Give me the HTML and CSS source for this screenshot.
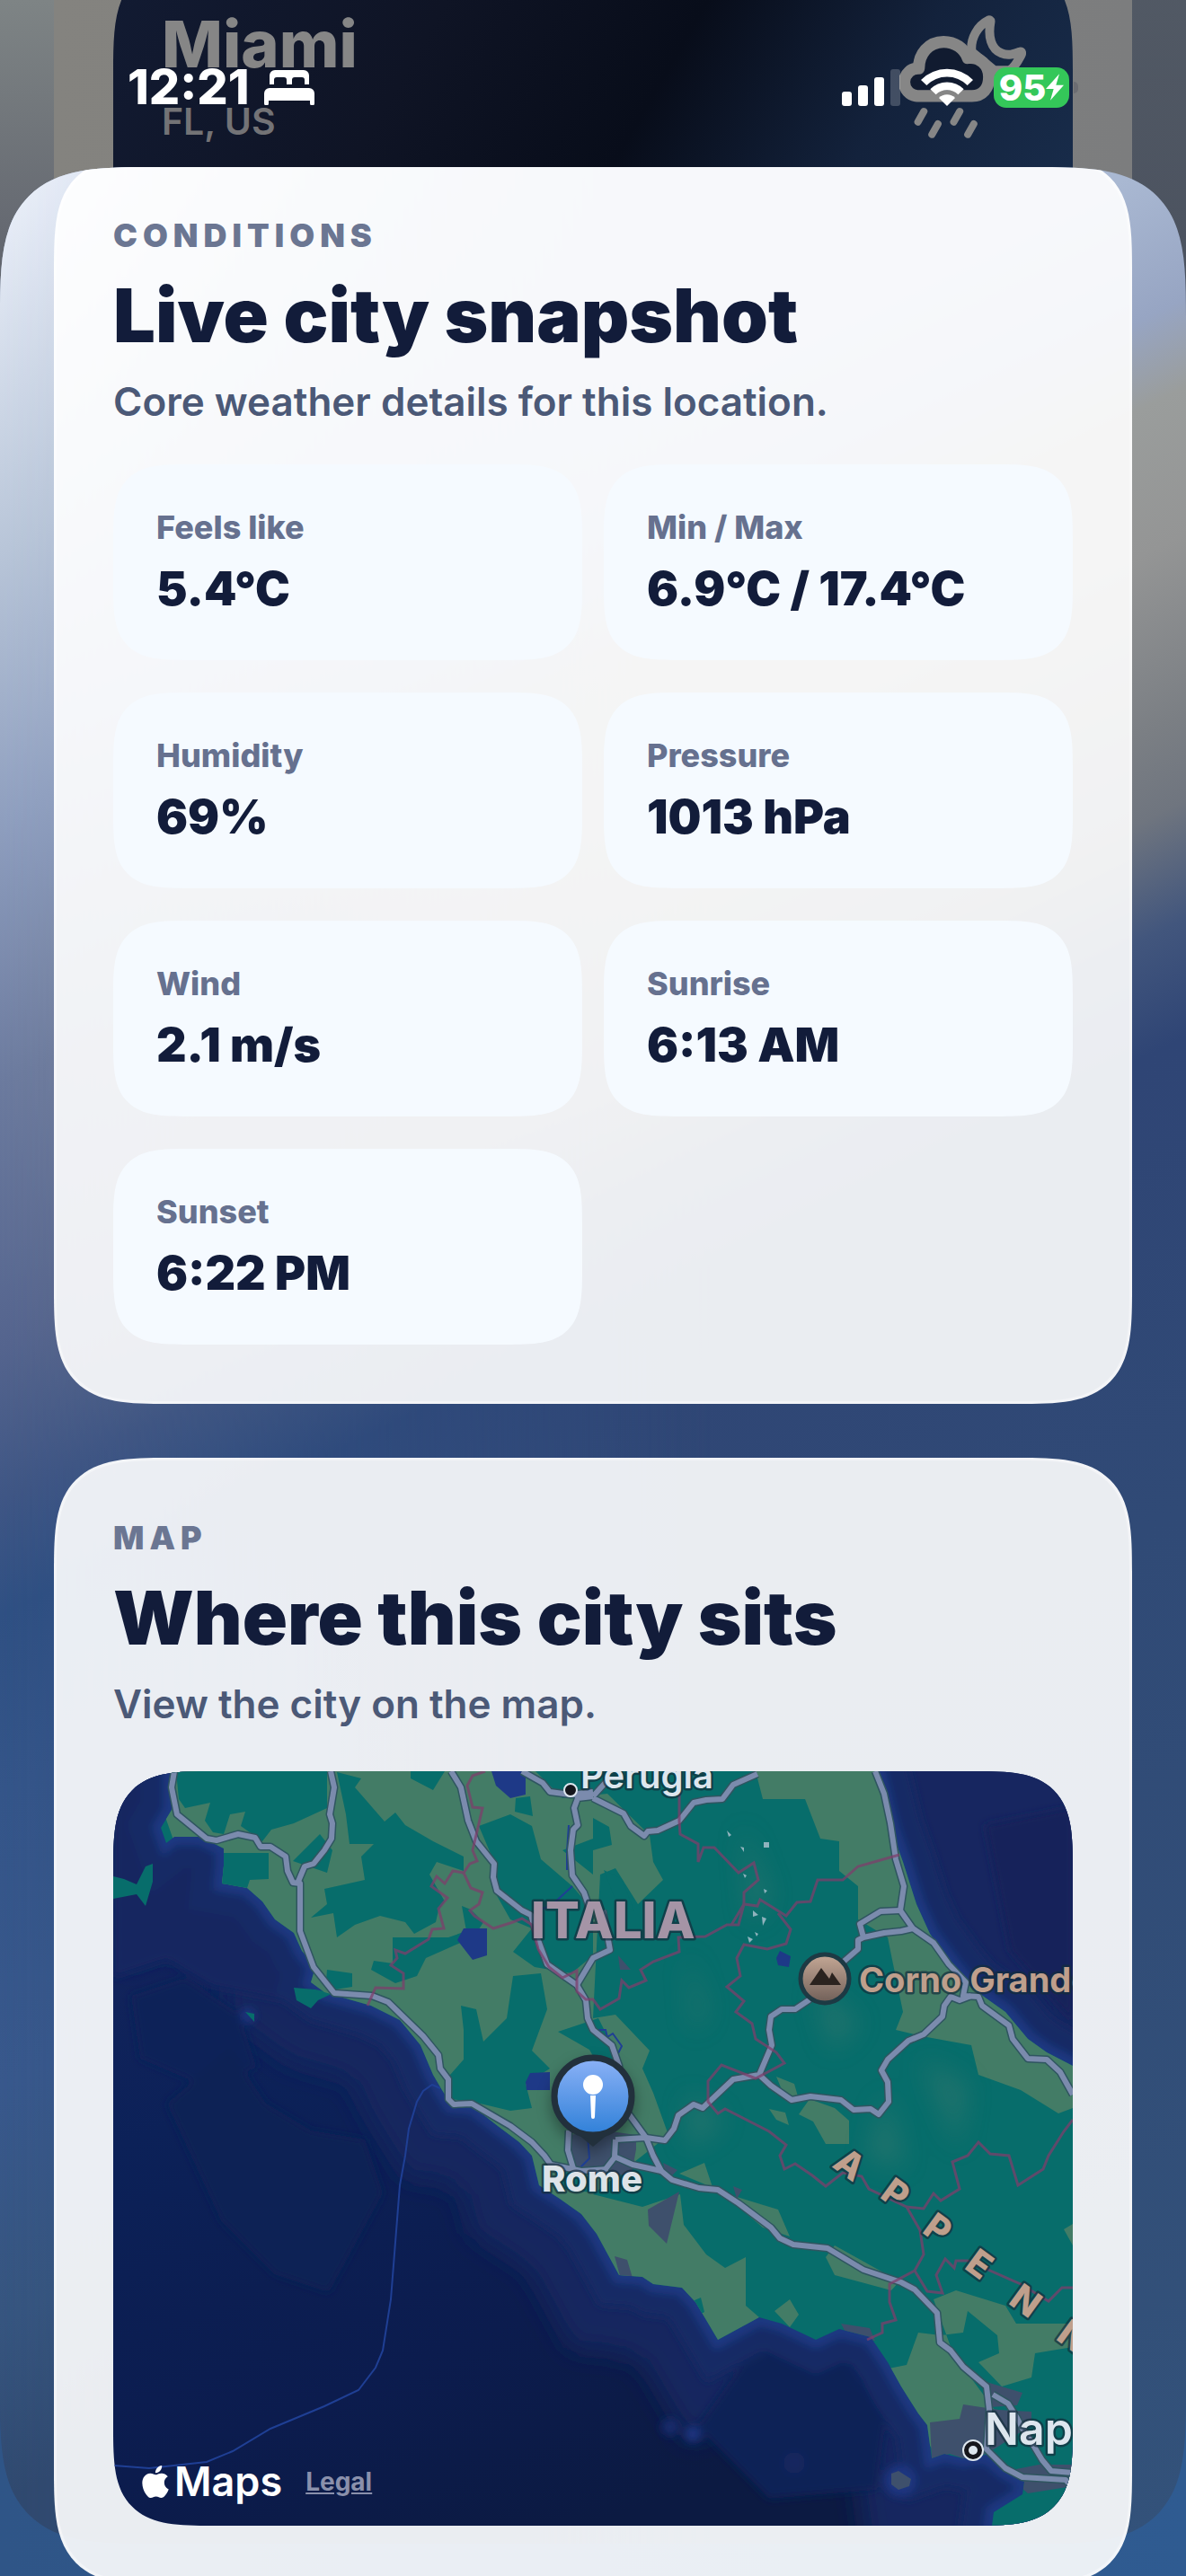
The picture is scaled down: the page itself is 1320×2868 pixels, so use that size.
FILE: index.html
```html
<!DOCTYPE html>
<html lang="en">
<head>
    <meta charset="UTF-8">
    <meta name="viewport" content="width=device-width, initial-scale=1.0">
    <title>City details</title>
    <link rel="stylesheet" href="styles.css">
</head>
<body>
    <header class="status-bar">
        <div class="status-left">
            <span class="time">12:21</span>
            <svg class="bed" viewBox="0 0 56 39" aria-hidden="true">
                <path d="M6 16V6a6 6 0 0 1 6-6h32a6 6 0 0 1 6 6v10h-5v-5a3 3 0 0 0-3-3h-8a3 3 0 0 0-3 3v5h-6v-5a3 3 0 0 0-3-3h-8a3 3 0 0 0-3 3v5z"/>
                <path d="M0 26a6 6 0 0 1 6-6h44a6 6 0 0 1 6 6v11a2 2 0 0 1-5 0v-3H5v3a2 2 0 0 1-5 0z"/>
            </svg>
        </div>
        <div class="status-right">
            <svg class="signal" viewBox="0 0 65 41" aria-hidden="true">
                <rect x="0" y="25" width="11" height="16" rx="3"/>
                <rect x="18" y="18" width="11" height="23" rx="3"/>
                <rect x="36" y="9" width="11" height="32" rx="3"/>
                <rect x="54" y="0" width="11" height="41" rx="3" opacity=".2"/>
            </svg>
            <svg class="wifi" viewBox="0 0 174 126" aria-hidden="true">
                <path d="M0 39a122 122 0 0 1 174 0l-19 18a96 96 0 0 0-136 0z"/>
                <path d="M31 70a79 79 0 0 1 112 0l-19 18a52 52 0 0 0-74 0z"/>
                <path d="M60 99a38 38 0 0 1 54 0l-27 27z"/>
            </svg>
            <div class="battery">
                <span>95</span>
                <svg viewBox="0 0 60 88" aria-hidden="true"><path d="M45 0 0 50h26L15 88l45-51H34z"/></svg>
            </div>
        </div>
    </header>

    <!-- Previous screen, dimmed -->
    <div class="behind">
        <div class="behind-card">
            <div class="hero">
                <div>
                    <div class="hero-city">Miami</div>
                    <div class="hero-region">FL, US</div>
                </div>
                <svg class="hero-icon" viewBox="243 50 424 412" aria-hidden="true">
                    <path d="M485 172c-5-46 20-87 58-106 2 0 6 0 5 6-9 50 2 91 36 105 24 10 44 2 63-5 6 0 7 5 3 12-10 19-22 41-38 50h-52z"/>
                    <path class="cloud" d="M303 320a40 40 0 0 1 5-92c0-48 32-89 83-89 38 0 69 22 81 54 39-6 71 24 71 63s-22 64-57 64z"/>
                    <path class="rain" d="M325 372l-20 35M372 414l-20 35M445 372l-20 35M492 414l-20 35"/>
                </svg>
            </div>
        </div>
    </div>

    <main class="sheet">
        <section class="card">
            <p class="eyebrow">CONDITIONS</p>
            <h2>Live city snapshot</h2>
            <p class="subtitle">Core weather details for this location.</p>
            <dl class="tiles">
                <div class="tile"><dt>Feels like</dt><dd>5.4°C</dd></div>
                <div class="tile"><dt>Min / Max</dt><dd>6.9°C / 17.4°C</dd></div>
                <div class="tile"><dt>Humidity</dt><dd>69%</dd></div>
                <div class="tile"><dt>Pressure</dt><dd>1013 hPa</dd></div>
                <div class="tile"><dt>Wind</dt><dd>2.1 m/s</dd></div>
                <div class="tile"><dt>Sunrise</dt><dd>6:13 AM</dd></div>
                <div class="tile"><dt>Sunset</dt><dd>6:22 PM</dd></div>
            </dl>
        </section>

        <section class="card">
            <p class="eyebrow">MAP</p>
            <h2>Where this city sits</h2>
            <p class="subtitle">View the city on the map.</p>
            <div class="map">
                <svg class="map-canvas" viewBox="0 0 1068 840" preserveAspectRatio="xMidYMid slice" role="img" aria-label="Map of central Italy">
                    <defs>
                        <linearGradient id="deep" x1="0" y1="0" x2=".5" y2="1">
                            <stop offset="0" stop-color="#17265f"/>
                            <stop offset=".4" stop-color="#0c2158"/>
                            <stop offset=".75" stop-color="#0c1c4e"/>
                            <stop offset="1" stop-color="#0c1a42"/>
                        </linearGradient>
                        <linearGradient id="pinFill" x1="0" y1="0" x2="0" y2="1">
                            <stop offset="0" stop-color="#8cb2f7"/>
                            <stop offset="1" stop-color="#2f80d8"/>
                        </linearGradient>
                        <linearGradient id="peakFill" x1="0" y1="0" x2="0" y2="1">
                            <stop offset="0" stop-color="#c5a896"/>
                            <stop offset="1" stop-color="#705f58"/>
                        </linearGradient>
                        <filter id="soft" x="-10%" y="-10%" width="120%" height="120%"><feGaussianBlur stdDeviation="5"/></filter>
                        <filter id="terrain" x="-10%" y="-10%" width="120%" height="120%"><feGaussianBlur stdDeviation="14"/></filter>
                        <path id="land" d="M65 0V43L53 63l6 17 9-7h29l26 13v19l-2 20 28 5 17 15 14 20 21 15 9 20 15 18-5 17 15 11 24 7 28 8 32 16 23 28 14 33 10 17 10 16 24 2 28 22 24 18 14 15 8 33 23 15 24 17 17 22 25 46 26 2 12 8 32 4 15 16 12 20 13 22 46-25 25 7 38 18 26-12 35 9 19 28 15 27 19 30 10 13 5 37 14-5 21 5 26-4 19 17 23 13-2 14-32 20-2 15h90V328l-29-15-21-15-25-30-38-27-17-20-29-40-15-33-15-47-13-36L850 0z"/>
                        <clipPath id="landClip"><use href="#land"/></clipPath>
                        <g id="roads">
                            <path d="M68 0l-3 18 6 30 33 27 11 2 24-7 19 4 6 10h11l17 11 2 16 6 13 8 1v53l15 40 23 29 42 3 18 7 39 38 17 21 2 15 9 12v22l6 6 20-1 43 25 24 18 14 15 7 10 34 7 30-2"/>
                            <path d="M242 0l4 18-5 30 3 10-1 17-8 13-12 15-10 3-8 19"/>
                            <path d="M376 0l11 18 8 37 9 23 20 25-1 15 4 15 28 22 10 5 8 28 10 27 33 23 10 17 2 20 6 13 21 17 8 23 3 43 27 37 8 20 9 17 12 10 30 9 21 2 23 15 36 27 10 12 15 7 38 4 40 24 42 14 15 8 25 26 3 33 12 9 14 18 26 22 3 26-3 44 21 21 19 10 48 3 8 9"/>
                            <path d="M455 0l23 13 8 10 23 3 25-3M534 30l34 17 8 14 15 11 4-5 11-1 24-11 16-20 14-3 18-1 12-16 27-12M534 28l-17 2-4 11 4 19-5 5-3 23 2 28 13 19 7 20M545 155l8 44-19 9-6 10-12 20M534 28l18-20"/>
                            <path d="M848 0l10 25 7 33 6 40 9 30-4 27 14 20 23 16 17 24 19 20-3 15 17 1 4 10 30 22 4 15 17 22 21 1 15 14 14 25"/>
                            <path d="M876 155l-22 1-23 14 4 15-6 3v10l-15 13-40 44-15 10-15 0-12 8-2 15 3 17-14 33-29 5-34 32-10-4-17 12-5 15-10 13-21-3-34 2M835 185l23-5 19-2 13-3"/>
                            <path d="M719 338l13 12 23 16 21-4 34 4 14 11 19-1 9 6 11-14-1-22-7-13 7-12 23-21 17-7 21-20 2-12 7-10 10 4 13-5"/>
                            <path d="M507 400l-1 22 6 20M559 410l-1 20-14 18M560 430l18 8 32 7M979 694l17 10 10 16 6 12 10 15 12 20 10 12 24 2"/>
                        </g>
                    </defs>

                    <!-- Sea -->
                    <rect width="1068" height="840" fill="url(#deep)"/>
                    <use href="#land" class="shelf shelf-far" filter="url(#terrain)"/>
                    <path d="M850 0h218v340L938 221z" fill="#172660"/>
                    <g filter="url(#soft)">
                        <path d="M970 60l98-20v240l-70-80z" fill="#15235a"/>
                        <path d="M0 0h60v60l60 70 60 70 30 60-100-20-50-30-60 20z" fill="#172660"/>
                        <path d="M20 250l60-20 60 40 20 60-60 20-70-30z" fill="#0c2358"/>
                        <path d="M650 730l50-70 60-30 60 30 40 60-10 80-120 10z" fill="#0b2157"/>
                        <path d="M60 370l70-60 40 60 50 30 60 10 20 60-60 110-60-20-60-60z" fill="#0e2054"/>
                        <use href="#land" class="shelf shelf-mid"/>
                        <use href="#land" class="shelf shelf-near"/>
                        <circle cx="150" cy="272" r="8" fill="#1b3580"/>
                        <circle cx="620" cy="730" r="10" fill="#162a6a"/>
                        <circle cx="645" cy="738" r="9" fill="#1b3580"/>
                        <circle cx="758" cy="770" r="12" fill="#15265f"/>
                        <circle cx="876" cy="790" r="18" fill="#1b3580"/>
                    </g>
                    <path class="ferry" d="M364 353l-9-4-10 7-7 12-9 30-4 30-6 33-10 127-9 57-8 19-19 25-38 18-60 25-42 25-29 12-64 7-39-3"/>

                    <!-- Land -->
                    <use href="#land" class="forest"/>
                    <path class="forest" d="M0 117l12 3 14 6 10-20 8-3v20l-8 27-10-13-26 5zM201 241l24 2 20 4-17 8-8 9-16-9zM147 268l10 2v9z"/>
                    <path class="urban" d="M866 782l8-3 14 9-2 8-12 4-8-6z"/>
                    <g clip-path="url(#landClip)">
                        <path class="plain" d="M40 0H470l30 30 50-5 47 46 4 30 11 20-28 27-25-40-17 7-8 160 25-4 38 40-8 20 12 27 17 47-29 23-55 43 55 14 42-14 4 34 25 33 21 15 23-12v54l15 13-60 40-120-80-130-120-160-160L100 170z"/>
                        <path class="plain" d="M715 0l8 31h47l17 44 21 3v33l21 17v37l33 20 4 20 13 63-8 20 29 7 55 10 8 33 47 17 42 26 16-6V0z"/>
                        <path class="plain" d="M630 448l28-12 10 30 72 22 13 30-30-10-50-42zM793 541l10-13 72 40-9 10-63-17zM736 601l17-13 10 17-10 14zM775 365l-12 17 16 8 14 25h26l0-26-16-14zM738 340l20 8 4 14-14 2zM730 376l18 4 4 14-14-6z"/>
                        <path class="plain" d="M913 588l25-10 55 17 12 20 63 0v26l-42 7-4 27-33 10-26-27 23-10-2-20-33-27-5 24-25 3-25-3-13 36-30 6 60 90 40 0 8-12h26v-26l-52-70zM1058 510l10-6v24z"/>
                        <path class="forest" d="M70 0l3 31 7 10 28-6-6 20 9 13 12 2 7-22 17-3-5 16 24 17 10-13 25-7 37-17V0zM123 91h50v29l-21 1-3 9-28-4zM200 100l30-30 14 18-6 25z"/>
                        <path class="forest" d="M249 1l27 7-7 10 33 38 12-10 11 14 31 18 34 17v16l-30-10-8 14 17 30-7 10-3 13-24 13-10-13-28-7-28 10-20 14-4-27-25 5 18-15-3-17 45-10-4-26 14-14h-27l-4-33z"/>
                        <path class="forest" d="M331 8l25 13 13-21h-38zM407 61l35-13 24 13 10 37 35 30 23 27v50l-24 20-41-7-24-17 21-26-24-10-21-37 3-27zM448 30l16-2 3 22-20-5zM490 0h60v20l-30 10zM500 88l34-13v40zM534 52l18 10 3 20-21 6z"/>
                        <path class="forest" d="M311 185l62 0 20-7-5-28 10 4 14 14-10 16-54 24-10 20-24 8-27-15 3-10 21 3zM238 221l28 4v15l-19 3-10-9zM546 110l20 10 14 36-20-10z"/>
                        <path class="forest" d="M387 261l17 4 8 36 26-26 7-47 31-3 7 40-17 46 20 20-27 17 7 27-24 3-42-10-24-3-1-27 15-17v-33zM495 290l45-15 20 40-10 30-20-35zM490 440l30 0 20 30-40-5zM640 592l14-6 4 16-10 6z"/>
                        <path class="urban" d="M504 405l50-4 28 4v16l-5 27-30 4-38-7zM595 488l35-20-14 58-20-20zM909 725l33-4 4-16 40 6 36 2v15l-42 27-25 13-24-8-20 6zM972 680l40 12-6 14-30 2zM990 780l40-8 38 0v24l-50 8zM810 615l32 5 6 14-30-4zM558 540l14 4 6 20-14-2zM612 436l16 8-12 12zM562 205l14 16-12 0zM690 462l10 4-6 10z"/>
                        <g class="relief" filter="url(#terrain)">
                            <path d="M700 60l30 80-20 30zM640 200l20 70-14 20zM780 240l50 40-30 30zM900 320l50 30-10 70zM860 360l20 80-40-10zM640 360l40 30-40 30z"/>
                        </g>
                        <path class="snow" d="M683 66l5 5-3 2zM724 79h6v6h-6zM698 84l4 1v5zM701 114l4 2-2 3zM724 131l4 2-3 3zM712 155l6 5-6 2zM722 162l5 2-4 8zM706 184l6 3-4 4zM714 179l4 2-2 3z"/>
                    </g>
                    <path class="water" d="M421 0h38v26l-17 4-16-14zM383 188l7-13h26v30l-16 5zM459 346l5-10 22-1v20h-26zM738 208l4-8 12 6-2 12-12-2z"/>
                    <path class="river" d="M511 128l-24 22-18 6M536 288h12l2 8 6-4 10 14-6 12M528 405l2 26-12 12M507 60l-2 30 0 20"/>

                    <!-- Motorways: dark casing first, then the road itself -->
                    <use href="#roads" class="road road-casing"/>
                    <use href="#roads" class="road road-top"/>

                    <!-- Region borders -->
                    <g class="borders">
                        <path d="M414 0l-14 5-6 11 6 24 11 1-11 47 5 12-8 3-7 10-12-2-9 14-9-8-6 11 18 13-10 12 6 22-13 1-4 11-26 16-11-4 2 9-7 8 14 9v17l-31-1-9 20"/>
                        <path d="M390 113l8 17 13 5-4 13-10 7 5 6 21 14 19-6 13-5 11 7 7 27 12 20 15 12 16-8v23l10 9h8l8 11 21-12 3-20 8 8 19-8-6-12 14-9 29-11-1-16 30-1 24-13h13l6-23 15 2 3-7 29 18 12-15 15-1 8-24 28 0 17-15 46-13"/>
                        <path d="M630 15v40l1 15 20 11v20l6-16h12l27 28 17-11 5 19-16 14v13l-14 23"/>
                        <path d="M740 158l14 18-5 16-21 6-26-5-8 15 4 20-15 12 19 16-9 12 18 13 4 17 23 15 9 12-32 17-38-15-15 18v23l11 13 8-5 49 25 19 15-7 12 5 15 12-6 19 13 15 12 19-15 21 4 8 14 42 20 19 2 11-17 8 8 21-13-8-30 17-7 12-15 13 13 21 2 10 33 28-18 6-15 17-27 10-13"/>
                        <path d="M883 485l15 26 4 27-10 18-28 15v20l7 20-15 4v10l-17 8"/>
                        <path d="M892 556l14 23 17 2-7-20 10-18 10 10 2-8h13l59 26 31 19 15-15h12"/>
                    </g>

                    <!-- Labels -->
                    <circle class="town" cx="509" cy="21" r="7"/>
                    <text class="label label-city" x="520" y="19" font-size="40">Perugia</text>
                    <text class="label label-country" x="465" y="186" font-size="56">ITALIA</text>
                    <g class="peak">
                        <circle cx="792" cy="231" r="27" fill="url(#peakFill)"/>
                        <path d="M775 238l13-19 9 12 3-7 10 14z"/>
                    </g>
                    <text class="label label-peak" x="830" y="246" font-size="38">Corno Grande</text>
                    <text class="label label-range" x="799 852 899 946 995 1048" y="440 474 513 553 592 632" rotate="36" font-size="40">APPENN</text>
                    <text class="label label-city" x="970" y="750" font-size="50">Naples</text>
                    <circle class="town" cx="957" cy="756" r="11"/>
                    <circle cx="957" cy="756" r="5" fill="#dde6ee"/>
                    <text class="label label-main" x="477" y="468" font-size="40">Rome</text>
                    <g class="pin">
                        <path d="M512 400l22 18 22-18z" fill="#22303c"/>
                        <circle cx="534" cy="362" r="43" fill="url(#pinFill)"/>
                        <circle cx="534" cy="349" r="11" fill="#fff"/>
                        <path d="M531 361h6l-1 24a2 2 0 0 1-4 0z" fill="#fff"/>
                    </g>
                </svg>
                <div class="map-credit">
                    <svg class="apple" viewBox="2 0 20 24" aria-hidden="true"><path d="M12.152 6.896c-.948 0-2.415-1.078-3.96-1.04-2.04.027-3.91 1.183-4.961 3.014-2.117 3.675-.546 9.103 1.519 12.09 1.013 1.454 2.208 3.09 3.792 3.039 1.52-.065 2.09-.987 3.935-.987 1.831 0 2.35.987 3.96.948 1.637-.026 2.676-1.48 3.676-2.948 1.156-1.688 1.636-3.325 1.662-3.415-.039-.013-3.182-1.221-3.22-4.857-.026-3.04 2.48-4.494 2.597-4.559-1.429-2.09-3.623-2.324-4.39-2.376-2-.156-3.675 1.09-4.61 1.09zM15.53 3.83c.843-1.012 1.4-2.427 1.245-3.83-1.207.052-2.662.805-3.532 1.818-.78.896-1.454 2.338-1.273 3.714 1.338.104 2.715-.688 3.559-1.701"/></svg>
                    <span class="maps-name">Maps</span>
                    <a href="#legal">Legal</a>
                </div>
            </div>
        </section>
    </main>
</body>
</html>
```
FILE: styles.css
```css
* {
    box-sizing: border-box;
}

body {
    position: relative;
    display: flex;
    flex-direction: column;
    height: 100vh;
    margin: 0;
    overflow: hidden;
    font-family: Inter, "Liberation Sans", sans-serif;
    color: #121c3a;
    background: linear-gradient(90deg, #2f5587, #2f5b91);
}

h2, p, dl, dd {
    margin: 0;
}

/* Status bar */
.status-bar {
    position: absolute;
    top: 66px;
    left: 0;
    right: 0;
    z-index: 2;
    display: flex;
    justify-content: space-between;
    align-items: center;
    height: 62px;
    padding: 0 130px 0 142px;
    color: #fff;
}

.status-left, .status-right {
    display: flex;
    align-items: center;
}

.status-left {
    gap: 16px;
}

.status-bar svg {
    display: block;
    fill: currentColor;
}

.time {
    font-size: 54px;
    font-weight: 800;
    line-height: 62px;
}

.bed {
    width: 56px;
    height: 39px;
}

.status-right {
    gap: 23px;
}

.signal {
    width: 65px;
    height: 41px;
}

.wifi {
    width: 58px;
    height: 42px;
}

.battery {
    position: relative;
    display: flex;
    align-items: center;
    justify-content: center;
    width: 84px;
    height: 45px;
    border-radius: 14px;
    background: #34c759;
    font-size: 40px;
    font-weight: 800;
}

.battery::after {
    content: "";
    position: absolute;
    right: -10px;
    width: 5px;
    height: 13px;
    border-radius: 0 5px 5px 0;
    background: #6c6d72;
}

.battery svg {
    width: 20px;
    height: 30px;
}

/* Previous screen, scrolled up so the top of its card is out of view */
.behind {
    flex: none;
    height: 400px;
    padding: 0 60px;
    overflow: hidden;
    background: linear-gradient(90deg, rgba(0, 0, 0, 0) 40%, rgba(70, 78, 92, .8) 90%), linear-gradient(#7e8485, #666a72 250px, #555a64);
}

.behind-card {
    height: 100%;
    padding: 0 66px;
    background: linear-gradient(90deg, #84837f, #7c7d7e);
}

.hero {
    display: flex;
    justify-content: space-between;
    align-items: flex-start;
    height: 448px;
    padding: 48px 52px 0 54px;
    border-radius: 84px;
    background: linear-gradient(120deg, #121b33 0, #0f1425 30%, #080d1a 52%, #13223c 72%, #1a3050);
    color: #868686;
    translate: 0 -48px;
}

.hero-city {
    padding-top: 5px;
    font-size: 72px;
    font-weight: 800;
    line-height: 88px;
}

.hero-region {
    padding-top: 16px;
    font-size: 41px;
    font-weight: 600;
    line-height: 52px;
    color: #737376;
}

.hero-icon {
    width: 141px;
    height: 137px;
    margin-top: 17px;
    fill: none;
    stroke: #868686;
    stroke-width: 30;
    stroke-linecap: round;
    stroke-linejoin: round;
}

.hero-icon .cloud {
    fill: #111b30;
    stroke-width: 40;
}

.hero-icon .rain {
    stroke-width: 24;
}

/* Sheet */
.sheet {
    position: relative;
    flex: 1;
    display: flex;
    flex-direction: column;
    gap: 60px;
    min-height: 0;
    margin-top: -214px;
    padding: 0 60px;
    border-radius: 110px 110px 0 0;
    overflow: hidden;
    isolation: isolate;
}

/* Two washes: the right-hand tones, and the left-hand ones fading over them */
.sheet::before, .sheet::after {
    content: "";
    position: absolute;
    inset: 0 0 36px;
    z-index: -1;
    border-radius: 0 0 110px 110px;
}

.sheet::before {
    background: linear-gradient(154deg, #a9b8d2 19%, #97a5c3 24%, #9a9d9c 27%, #949595 32%, #7b7f84 38%, #6f757f 41%, #42567d 45%, #2f4575 49%, #304a76 65%, #33527a);
}

.sheet::after {
    background: linear-gradient(154deg, #eff3fc, #b8c5d8 13%, #8f9fbf 22%, #6b7a9e 31%, #54648e 40%, #3f5685 45%, #2f5083 49%, #345589 55%, #38588c 65%, #36557f 73%, #30496f 79%);
    -webkit-mask: linear-gradient(90deg, #000, transparent 60%);
    mask: linear-gradient(90deg, #000, transparent 60%);
}

.card {
    flex: none;
    padding: 63px;
    border: 3px solid rgba(255, 255, 255, .4);
    border-radius: 90px;
    background: rgba(255, 255, 255, .9);
}

/* The sheet is scrolled a little, so the first card starts above its edge */
.card:first-child {
    margin-top: -13px;
}

.eyebrow {
    margin-bottom: 16px;
    font-size: 36px;
    font-weight: 900;
    line-height: 46px;
    letter-spacing: 6px;
    color: #6b7692;
}

h2 {
    margin-bottom: 16px;
    font-size: 83px;
    font-weight: 900;
    line-height: 100px;
}

.subtitle {
    font-size: 44px;
    font-weight: 600;
    line-height: 60px;
    color: #4b5977;
}

.tiles {
    display: grid;
    grid-template-columns: 1fr 1fr;
    gap: 36px 24px;
    margin-top: 40px;
}

.tile {
    padding: 48px;
    border-radius: 60px;
    background: #f5faff;
}

.tile dt {
    margin-bottom: 16px;
    font-size: 36px;
    font-weight: 800;
    line-height: 44px;
    color: #66718f;
}

.tile dd {
    font-size: 52px;
    font-weight: 900;
    line-height: 62px;
}

/* Map */
.map {
    position: relative;
    aspect-ratio: 1068 / 840;
    margin-top: 45px;
    border-radius: 75px;
    overflow: hidden;
}

.map-canvas {
    display: block;
    width: 100%;
    height: 100%;
}

.shelf {
    fill: none;
}

.shelf-far {
    stroke: #14255e;
    stroke-width: 170;
}

.shelf-mid {
    stroke: #182965;
    stroke-width: 70;
}

.shelf-near {
    stroke: #1d3781;
    stroke-width: 18;
}

.ferry, .river {
    fill: none;
    stroke: #1f3f94;
    stroke-width: 2;
}

.forest {
    fill: #076d6b;
}

.plain {
    fill: #437c66;
}

.urban {
    fill: #3e506c;
}

.water {
    fill: #1e3987;
}

.relief {
    fill: #3d7a70;
    opacity: .5;
}

.snow {
    fill: #8fb3bd;
}

.borders {
    fill: none;
    stroke: #7d3f6c;
    stroke-width: 3;
    opacity: .75;
}

.road {
    fill: none;
    stroke-linejoin: round;
}

.road-casing {
    stroke: #2f5560;
    stroke-width: 9;
}

.road-top {
    stroke: #7b8bad;
    stroke-width: 6;
}

.label {
    paint-order: stroke;
    stroke: rgba(20, 45, 60, .7);
    stroke-width: 5;
    stroke-linejoin: round;
}

.label-city {
    font-weight: 600;
    fill: #dde6ee;
}

.label-country {
    font-weight: 800;
    fill: #a594a6;
}

.label-peak {
    font-weight: 700;
    fill: #bf9f8c;
}

.label-range {
    font-weight: 800;
    fill: #bf9f8c;
}

.label-main {
    font-weight: 800;
    fill: #dde3e8;
}

.town {
    fill: #15161c;
    stroke: #dde6ee;
    stroke-width: 2;
}

.peak circle {
    stroke: #1d3a44;
    stroke-width: 5;
}

.peak path {
    fill: #2b231f;
}

.pin {
    filter: drop-shadow(0 8px 8px rgba(0, 0, 0, .35));
}

.pin circle:first-of-type {
    stroke: #22303c;
    stroke-width: 7;
}

.map-credit {
    position: absolute;
    left: 32px;
    bottom: 22px;
    display: flex;
    align-items: center;
    gap: 6px;
    color: #fff;
}

.apple {
    width: 30px;
    height: 36px;
    fill: currentColor;
}

.maps-name {
    font-size: 45px;
    font-weight: 600;
    line-height: 54px;
}

.map-credit a {
    margin-left: 20px;
    font-size: 28px;
    font-weight: 700;
    color: #8a90ab;
}

/* Smoother corners where the browser knows them */
@supports (corner-shape: superellipse(1.7)) {
    .card, .tile, .map, .hero, .sheet, .sheet::before, .sheet::after {
        corner-shape: superellipse(1.7);
    }

    .card, .hero {
        border-radius: 128px;
    }

    .tile {
        border-radius: 84px;
    }

    .map {
        border-radius: 110px;
    }

    .sheet {
        border-radius: 168px 168px 0 0;
    }

    .sheet::before, .sheet::after {
        border-radius: 0 0 168px 168px;
    }
}
```
